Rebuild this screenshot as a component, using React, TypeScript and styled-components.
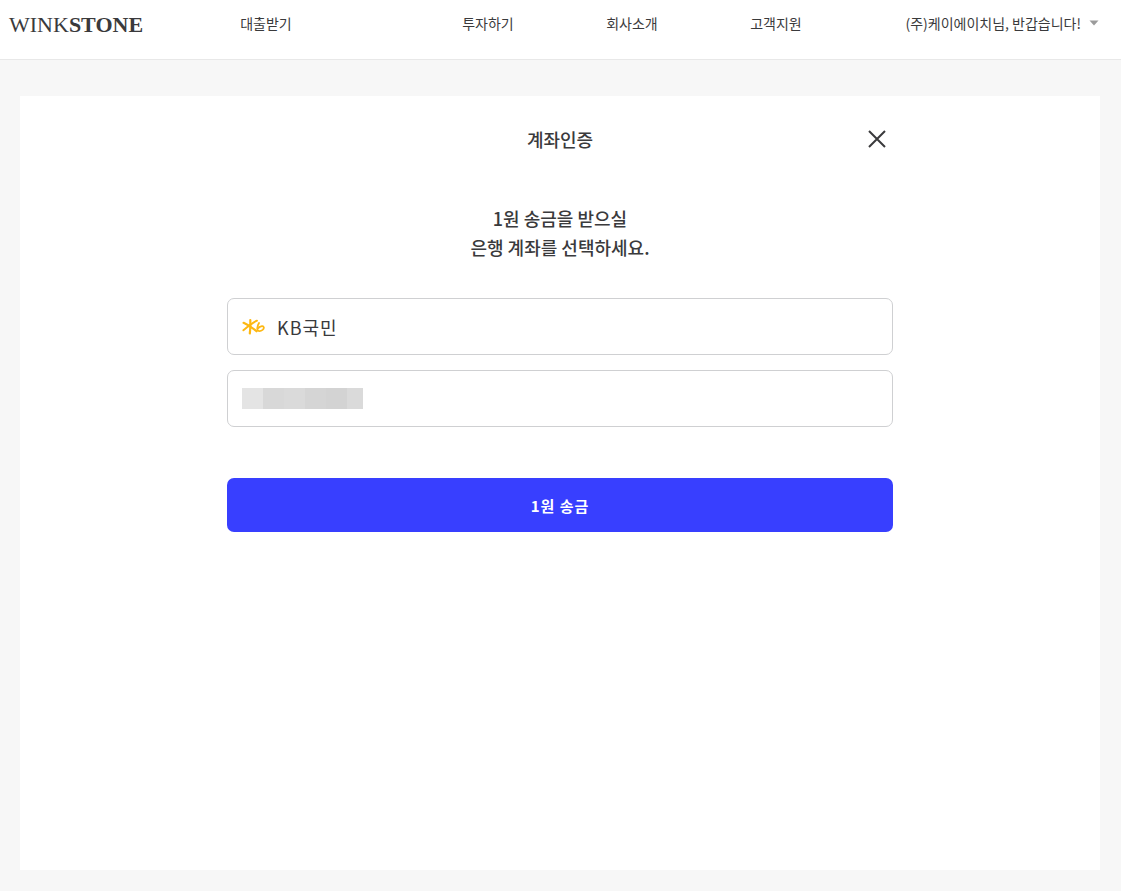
import React from "react";
import styled, { createGlobalStyle } from "styled-components";

const GlobalStyle = createGlobalStyle`
  *, *::before, *::after { box-sizing: border-box; }
  body {
    margin: 0;
    background: #f7f7f7;
    color: #3a3a3c;
    font-family: "Noto Sans CJK KR", "Noto Sans", sans-serif;
  }
  button, input { font: inherit; color: inherit; }
`;

const Page = styled.div`
  min-height: 100vh;
  display: flex;
  flex-direction: column;
`;

const Header = styled.header`
  display: flex;
  align-items: flex-start;
  height: 60px;
  padding: 11px 22px 0 9px;
  background: #fff;
  border-bottom: 1px solid #e8e8e8;
`;

const Logo = styled.a`
  width: 185px;
  color: #3a3a3c;
  font-family: "Liberation Serif", serif;
  font-size: 22px;
  line-height: 28px;
  text-decoration: none;
`;

const Nav = styled.nav`
  display: flex;
`;

const NavLink = styled.a<{ $wide?: boolean }>`
  width: 144px;
  margin-right: ${(p) => (p.$wide ? "78px" : "0")};
  color: #3a3a3c;
  font-size: 14px;
  line-height: 24px;
  text-align: center;
  text-decoration: none;
`;

const UserButton = styled.button`
  display: flex;
  align-items: center;
  gap: 8px;
  margin-left: auto;
  padding: 0;
  border: 0;
  background: none;
  font-size: 14px;
  line-height: 24px;
  white-space: nowrap;
  cursor: pointer;
`;

const Main = styled.main`
  flex: 1;
  display: flex;
  padding: 36px 21px 21px 20px;
`;

const Card = styled.section`
  flex: 1;
  padding: 27px 20px;
  background: #fff;
`;

const Content = styled.form`
  max-width: 666px;
  margin: 0 auto;
`;

const TitleRow = styled.div`
  display: grid;
  grid-template-columns: 1fr auto 1fr;
  align-items: center;
  height: 32px;
  padding: 0 7px;
`;

const Title = styled.h1`
  grid-column: 2;
  margin: 0;
  font-size: 18px;
  font-weight: 500;
  line-height: 32px;
`;

const CloseButton = styled.button`
  justify-self: end;
  display: flex;
  padding: 0;
  border: 0;
  background: none;
  cursor: pointer;
`;

const Message = styled.p`
  margin: 49px 0 36px;
  font-size: 18px;
  font-weight: 500;
  line-height: 29px;
  text-align: center;
`;

const Fields = styled.div`
  display: grid;
  gap: 15px;
`;

const BankButton = styled.button`
  display: flex;
  align-items: center;
  gap: 12px;
  height: 57px;
  padding: 0 14px;
  border: 1px solid #cfd0d2;
  border-radius: 7px;
  background: #fff;
  font-size: 18px;
  letter-spacing: 1px;
  cursor: pointer;
`;

const AccountField = styled.label`
  display: flex;
  align-items: center;
  height: 57px;
  padding: 0 14px;
  border: 1px solid #cfd0d2;
  border-radius: 7px;
  background: #fff;
`;

const AccountInput = styled.input`
  flex: 1;
  min-width: 0;
  padding: 0;
  border: 0;
  outline: 0;
  background: none;
  font-size: 18px;
`;

const Mask = styled.span`
  display: flex;
  height: 21px;
`;

const MaskCell = styled.span<{ $tone: string; $short?: boolean }>`
  width: ${(p) => (p.$short ? "16px" : "21px")};
  background: ${(p) => p.$tone};
`;

const SubmitButton = styled.button`
  width: 100%;
  height: 54px;
  margin-top: 51px;
  border: 0;
  border-radius: 7px;
  background: #383fff;
  color: #fff;
  font-size: 15px;
  font-weight: 700;
  letter-spacing: 1px;
  cursor: pointer;
`;

const maskTones = ["#e4e4e4", "#d8d8d8", "#dadada", "#d5d5d5", "#d3d3d3"];

export default function App() {
  return (
    <Page>
      <GlobalStyle />
      <Header>
        <Logo href="#">
          WINK<b>STONE</b>
        </Logo>
        <Nav>
          <NavLink href="#" $wide>대출받기</NavLink>
          <NavLink href="#">투자하기</NavLink>
          <NavLink href="#">회사소개</NavLink>
          <NavLink href="#">고객지원</NavLink>
        </Nav>
        <UserButton type="button">
          (주)케이에이치님, 반갑습니다!
          <svg width="10" height="6" viewBox="0 0 10 6" aria-hidden="true">
            <path d="M0.5 0.5h9L5 5.5z" fill="#9b9b9b" />
          </svg>
        </UserButton>
      </Header>
      <Main>
        <Card>
          <Content onSubmit={(e: React.FormEvent) => e.preventDefault()}>
            <TitleRow>
              <Title>계좌인증</Title>
              <CloseButton type="button" aria-label="닫기">
                <svg width="18" height="18" viewBox="0 0 18 18" aria-hidden="true">
                  <path d="M1 1l16 16M17 1L1 17" stroke="#3a3a3c" strokeWidth="2" />
                </svg>
              </CloseButton>
            </TitleRow>
            <Message>
              1원 송금을 받으실
              <br />
              은행 계좌를 선택하세요.
            </Message>
            <Fields>
              <BankButton type="button">
                <svg width="23" height="18" viewBox="0 0 23 18" fill="none" stroke="#fdb813" strokeLinecap="round" aria-hidden="true">
                  <path d="M8.3 2C8.6 7 8.5 11 7.8 15.5" strokeWidth="2.2" />
                  <path d="M1.6 4.8C4 6 6 7 8.2 8.6C11 10.4 12.8 11.6 14.5 13.3" strokeWidth="2.2" />
                  <path d="M15 2.7C11.5 4.3 6.5 8 1.4 12.3" strokeWidth="1.9" />
                  <path d="M17 5C15.8 7 15 9.6 15.4 11.5C15.8 13.6 18.6 13.5 20.6 11.9C22.6 10.2 22 8 20 8.2C18.3 8.4 16.8 9.4 15.7 10.6" strokeWidth="1.8" />
                </svg>
                KB국민
              </BankButton>
              <AccountField>
                <Mask>
                  {maskTones.map((tone) => (
                    <MaskCell key={tone} $tone={tone} />
                  ))}
                  <MaskCell $tone="#dadada" $short />
                </Mask>
                <AccountInput aria-label="계좌번호" />
              </AccountField>
            </Fields>
            <SubmitButton type="submit">1원 송금</SubmitButton>
          </Content>
        </Card>
      </Main>
    </Page>
  );
}
